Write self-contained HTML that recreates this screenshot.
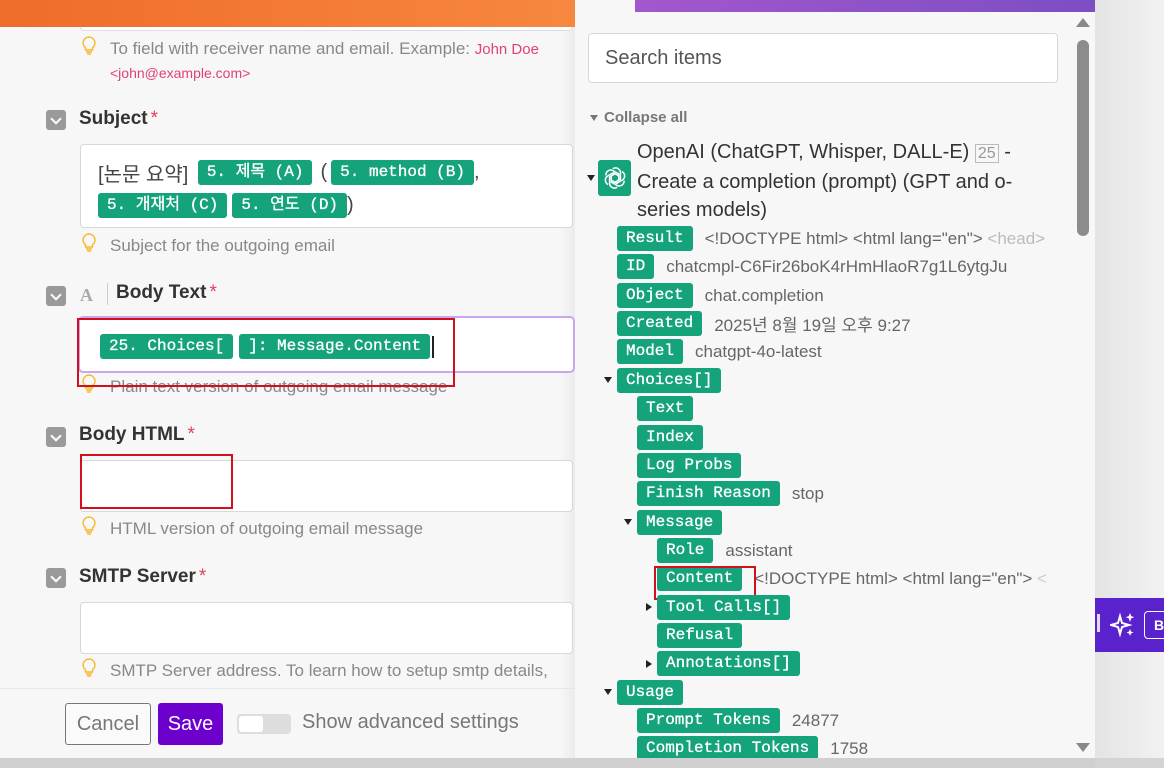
<!DOCTYPE html>
<html><head><meta charset="utf-8"><style>
*{box-sizing:border-box;margin:0;padding:0}
body{width:1164px;height:768px;overflow:hidden;background:#d4d4d4;font-family:"Liberation Sans","Noto Sans CJK KR",sans-serif;position:relative}
.abs{position:absolute}
#left{left:0;top:0;width:575px;height:758px;background:#f7f7f7}
#orange{left:0;top:0;width:575px;height:27px;background:linear-gradient(90deg,#ef6c2a,#f7873f)}
.hint{color:#888;font-size:17px;white-space:nowrap}
.bulb{width:14px;height:20px}
.chk{width:20px;height:20px;background:#9a9a9a;border-radius:3px}
.chk:after{content:"";position:absolute;left:6px;top:5px;width:6px;height:6px;border-right:2px solid #fff;border-bottom:2px solid #fff;transform:rotate(45deg)}
.lbl{font-size:19px;font-weight:bold;color:#333}
.lbl b{color:#e0405a;font-weight:normal;margin-left:3px}
.inp{background:#fff;border:1px solid #d8d8d8;border-radius:4px}
.tag{display:inline-block;background:#14a37b;color:#fff;font-family:"Liberation Mono","Noto Sans CJK KR",monospace;font-size:16px;font-weight:normal;-webkit-text-stroke:0.3px #fff;height:25px;line-height:25px;padding:0 9px;border-radius:3px;white-space:nowrap}
#right{left:575px;top:0;width:520px;height:758px;background:#f7f7f7}
.row{position:absolute;display:flex;align-items:center;white-space:nowrap}
.row .v{color:#666;font-size:17px;margin-left:12px}
.tri{position:absolute;width:0;height:0;border-left:4px solid transparent;border-right:4px solid transparent;border-top:6px solid #222}
.trr{position:absolute;width:0;height:0;border-top:4px solid transparent;border-bottom:4px solid transparent;border-left:6px solid #222}
.red{position:absolute;border:2px solid #d0101c}
</style></head><body>
<div class="abs" style="left:1095px;top:0;width:69px;height:758px;background:linear-gradient(90deg,#e4e4e4,#f2f2f2)"></div>
<div class="abs" id="left"></div>
<div class="abs" style="left:560px;top:0;width:15px;height:758px;background:linear-gradient(90deg,rgba(0,0,0,0),rgba(0,0,0,0.05))"></div>
<div class="abs" id="orange"></div>
<div class="abs" style="left:80px;top:27px;width:493px;height:4px;border:1px solid #ddd;border-top:none;border-radius:0 0 4px 4px;background:#fff"></div>

<svg class="abs bulb" style="left:82px;top:36px" viewBox="0 0 14 20"><path d="M7 1a6 6 0 0 0-3.5 10.8V14h7v-2.2A6 6 0 0 0 7 1z" fill="none" stroke="#f5b82e" stroke-width="1.5"/><path d="M4 16h6M5 18h4" stroke="#f5b82e" stroke-width="1.5"/></svg>
<div class="abs hint" style="left:110px;top:39px">To field with receiver name and email. Example: <span style="color:#e0407a;font-size:15px">John Doe</span></div>
<div class="abs" style="left:110px;top:65px;color:#e0407a;font-size:14px">&lt;john@example.com&gt;</div>

<div class="abs chk" style="left:46px;top:110px"></div>
<div class="abs lbl" style="left:79px;top:108px">Subject<b>*</b></div>
<div class="abs inp" style="left:80px;top:144px;width:493px;height:84px"></div>
<div class="abs" style="left:98px;top:158px;font-size:20px;color:#444;display:flex;align-items:center;white-space:nowrap">[논문 요약]&nbsp;<span class="tag" style="margin-left:4px">5. 제목 (A)</span><span style="margin:0 4px 0 8px">(</span><span class="tag">5. method (B)</span>,</div>
<div class="abs" style="left:98px;top:193px;font-size:20px;color:#444;display:flex;align-items:center;white-space:nowrap"><span class="tag">5. 개재처 (C)</span><span class="tag" style="margin-left:5px">5. 연도 (D)</span>)</div>
<svg class="abs bulb" style="left:82px;top:233px" viewBox="0 0 14 20"><path d="M7 1a6 6 0 0 0-3.5 10.8V14h7v-2.2A6 6 0 0 0 7 1z" fill="none" stroke="#f5b82e" stroke-width="1.5"/><path d="M4 16h6M5 18h4" stroke="#f5b82e" stroke-width="1.5"/></svg>
<div class="abs hint" style="left:110px;top:236px">Subject for the outgoing email</div>

<div class="abs chk" style="left:46px;top:286px"></div>
<div class="abs" style="left:80px;top:285px;font-size:18px;font-weight:bold;color:#aaa;font-family:'Liberation Serif',serif">A</div>
<div class="abs" style="left:107px;top:283px;width:1px;height:22px;background:#ccc"></div>
<div class="abs lbl" style="left:116px;top:282px">Body Text<b>*</b></div>
<div class="abs" style="left:78px;top:316px;width:497px;height:57px;border:2px solid #c9a6ee;border-radius:5px;background:#fff"></div>
<div class="abs" style="left:100px;top:334px;display:flex;align-items:center"><span class="tag">25. Choices[</span><span class="tag" style="margin-left:6px">]: Message.Content</span><span style="width:2px;height:22px;background:#222;margin-left:2px"></span></div>
<svg class="abs bulb" style="left:82px;top:374px" viewBox="0 0 14 20"><path d="M7 1a6 6 0 0 0-3.5 10.8V14h7v-2.2A6 6 0 0 0 7 1z" fill="none" stroke="#f5b82e" stroke-width="1.5"/><path d="M4 16h6M5 18h4" stroke="#f5b82e" stroke-width="1.5"/></svg>
<div class="abs hint" style="left:110px;top:377px">Plain text version of outgoing email message</div>
<div class="red" style="left:77px;top:318px;width:378px;height:69px"></div>

<div class="abs chk" style="left:46px;top:427px"></div>
<div class="abs lbl" style="left:79px;top:424px">Body HTML<b>*</b></div>
<div class="abs inp" style="left:80px;top:460px;width:493px;height:52px"></div>
<div class="red" style="left:80px;top:454px;width:153px;height:55px"></div>
<svg class="abs bulb" style="left:82px;top:516px" viewBox="0 0 14 20"><path d="M7 1a6 6 0 0 0-3.5 10.8V14h7v-2.2A6 6 0 0 0 7 1z" fill="none" stroke="#f5b82e" stroke-width="1.5"/><path d="M4 16h6M5 18h4" stroke="#f5b82e" stroke-width="1.5"/></svg>
<div class="abs hint" style="left:110px;top:519px">HTML version of outgoing email message</div>

<div class="abs chk" style="left:46px;top:568px"></div>
<div class="abs lbl" style="left:79px;top:566px">SMTP Server<b>*</b></div>
<div class="abs inp" style="left:80px;top:602px;width:493px;height:52px"></div>
<svg class="abs bulb" style="left:82px;top:658px" viewBox="0 0 14 20"><path d="M7 1a6 6 0 0 0-3.5 10.8V14h7v-2.2A6 6 0 0 0 7 1z" fill="none" stroke="#f5b82e" stroke-width="1.5"/><path d="M4 16h6M5 18h4" stroke="#f5b82e" stroke-width="1.5"/></svg>
<div class="abs hint" style="left:110px;top:661px">SMTP Server address. To learn how to setup smtp details,</div>
<div class="abs" style="left:0;top:688px;width:575px;height:1px;background:#e6e6e6"></div>
<div class="abs" style="left:65px;top:703px;width:86px;height:42px;border:1px solid #777;border-radius:3px;background:#fafafa;color:#777;font-size:20px;text-align:center;line-height:40px">Cancel</div>
<div class="abs" style="left:158px;top:703px;width:65px;height:42px;background:#6d00cc;border-radius:3px;color:#fff;font-size:20px;text-align:center;line-height:42px">Save</div>
<div class="abs" style="left:237px;top:714px;width:54px;height:20px;background:#ddd;border-radius:4px"><div style="position:absolute;left:2px;top:2px;width:24px;height:16px;background:#fff;border-radius:3px"></div></div>
<div class="abs" style="left:302px;top:711px;font-size:20px;color:#777">Show advanced settings</div>

<div class="abs" id="right"></div>
<div class="abs" style="left:635px;top:0;width:460px;height:12px;background:linear-gradient(90deg,#a457cc,#7c4ec4)"></div>
<div class="abs" style="left:588px;top:33px;width:470px;height:50px;border:1px solid #d8d8d8;border-radius:4px;background:#fff;color:#555;font-size:20px;padding:13px 0 0 16px">Search items</div>
<div class="abs" style="left:1076px;top:18px;width:0;height:0;border-left:7px solid transparent;border-right:7px solid transparent;border-bottom:9px solid #888"></div>
<div class="abs" style="left:1077px;top:40px;width:12px;height:196px;background:#8c8c8c;border-radius:6px"></div>
<div class="abs" style="left:1076px;top:743px;width:0;height:0;border-left:7px solid transparent;border-right:7px solid transparent;border-top:9px solid #888"></div>
<div class="tri" style="left:590px;top:115px;border-top-color:#777"></div>
<div class="abs" style="left:604px;top:109px;font-size:15px;font-weight:bold;color:#777">Collapse all</div>
<div class="tri" style="left:587px;top:175px"></div>
<div class="abs" style="left:598px;top:160px;width:33px;height:36px;background:#14a37b;border-radius:3px"></div>
<svg class="abs" style="left:602px;top:165px" width="26" height="26" viewBox="0 0 24 24" fill="none" stroke="#fff" stroke-width="1.4"><g transform="translate(12 12)"><path id="p" d="M-2 -8.5a4.5 4.5 0 0 1 7 3.3V1L0 4"/><use href="#p" transform="rotate(60)"/><use href="#p" transform="rotate(120)"/><use href="#p" transform="rotate(180)"/><use href="#p" transform="rotate(240)"/><use href="#p" transform="rotate(300)"/></g></svg>
<div class="abs" style="left:637px;top:138px;font-size:20px;color:#333;line-height:28px;width:420px">OpenAI (ChatGPT, Whisper, DALL-E) <span style="border:1px solid #bbb;color:#999;font-size:16px;padding:0 2px">25</span> - Create a completion (prompt) (GPT and o-series models)</div>

<div class="row" style="left:617px;top:226px"><span class="tag">Result</span><span class="v" style="color:#666">&lt;!DOCTYPE html&gt; &lt;html lang="en"&gt; <span style="color:#bbb">&lt;head&gt;</span></span></div>
<div class="row" style="left:617px;top:254px"><span class="tag">ID</span><span class="v">chatcmpl-C6Fir26boK4rHmHlaoR7g1L6ytgJu</span></div>
<div class="row" style="left:617px;top:283px"><span class="tag">Object</span><span class="v">chat.completion</span></div>
<div class="row" style="left:617px;top:311px"><span class="tag">Created</span><span class="v">2025년 8월 19일 오후 9:27</span></div>
<div class="row" style="left:617px;top:339px"><span class="tag">Model</span><span class="v">chatgpt-4o-latest</span></div>
<div class="tri" style="left:604px;top:377px"></div>
<div class="row" style="left:617px;top:368px"><span class="tag">Choices[]</span></div>
<div class="row" style="left:637px;top:396px"><span class="tag">Text</span></div>
<div class="row" style="left:637px;top:425px"><span class="tag">Index</span></div>
<div class="row" style="left:637px;top:453px"><span class="tag">Log Probs</span></div>
<div class="row" style="left:637px;top:481px"><span class="tag">Finish Reason</span><span class="v">stop</span></div>
<div class="tri" style="left:624px;top:519px"></div>
<div class="row" style="left:637px;top:510px"><span class="tag">Message</span></div>
<div class="row" style="left:657px;top:538px"><span class="tag">Role</span><span class="v">assistant</span></div>
<div class="row" style="left:657px;top:566px"><span class="tag">Content</span><span class="v">&lt;!DOCTYPE html&gt; &lt;html lang="en"&gt; <span style="color:#ccc">&lt;</span></span></div>
<div class="red" style="left:654px;top:566px;width:102px;height:34px"></div>
<div class="trr" style="left:646px;top:603px"></div>
<div class="row" style="left:657px;top:595px"><span class="tag">Tool Calls[]</span></div>
<div class="row" style="left:657px;top:623px"><span class="tag">Refusal</span></div>
<div class="trr" style="left:646px;top:660px"></div>
<div class="row" style="left:657px;top:651px"><span class="tag">Annotations[]</span></div>
<div class="tri" style="left:604px;top:689px"></div>
<div class="row" style="left:617px;top:680px"><span class="tag">Usage</span></div>
<div class="row" style="left:637px;top:708px"><span class="tag">Prompt Tokens</span><span class="v">24877</span></div>
<div class="row" style="left:637px;top:736px"><span class="tag">Completion Tokens</span><span class="v">1758</span></div>
<div class="abs" style="left:0;top:758px;width:1095px;height:10px;background:#d0d0d0"></div>

<div class="abs" style="left:1095px;top:598px;width:69px;height:54px;background:#5a22cc"></div>
<div class="abs" style="left:1097px;top:614px;width:3px;height:18px;background:#ddd"></div>
<svg class="abs" style="left:1110px;top:612px" width="26" height="26" viewBox="0 0 26 26" fill="#fff"><path d="M10 4l2 7 7 2-7 2-2 7-2-7-7-2 7-2z" fill="none" stroke="#fff" stroke-width="2"/><path d="M20 1l1.2 3 3 1.2-3 1.2L20 10l-1.2-3.6-3-1.2 3-1.2z"/><path d="M20 17l1 2.5 2.5 1-2.5 1L20 24l-1-2.5-2.5-1 2.5-1z"/></svg>
<div class="abs" style="left:1144px;top:611px;width:30px;height:28px;border:1.5px solid #fff;border-radius:4px;color:#fff;font-weight:bold;font-size:14px;padding:5px 0 0 9px">B</div>
</body></html>
